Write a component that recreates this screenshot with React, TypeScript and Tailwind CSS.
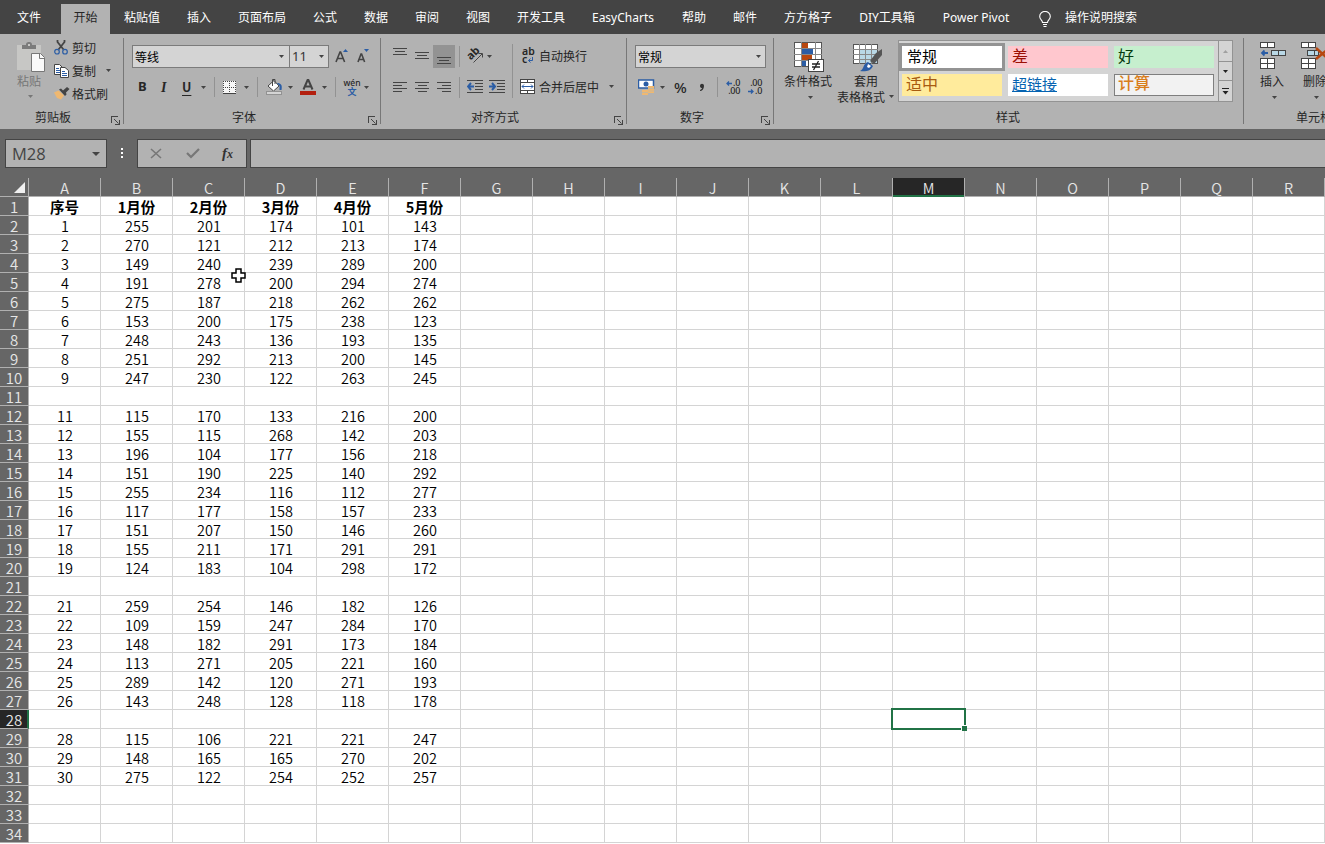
import React from "react";

type Tab = { label: string; w: string; active?: boolean };

const TABS: Tab[] = [
  { label: "文件", w: "w-[58px] mr-[3px]" },
  { label: "开始", w: "w-[49px]", active: true },
  { label: "粘贴值", w: "w-[64px]" },
  { label: "插入", w: "w-[50px]" },
  { label: "页面布局", w: "w-[76px]" },
  { label: "公式", w: "w-[50px]" },
  { label: "数据", w: "w-[52px]" },
  { label: "审阅", w: "w-[50px]" },
  { label: "视图", w: "w-[52px]" },
  { label: "开发工具", w: "w-[74px]" },
  { label: "EasyCharts", w: "w-[90px]" },
  { label: "帮助", w: "w-[52px]" },
  { label: "邮件", w: "w-[50px]" },
  { label: "方方格子", w: "w-[76px]" },
  { label: "DIY工具箱", w: "w-[82px]" },
  { label: "Power Pivot", w: "w-[96px]" },
];

const COLUMNS = "ABCDEFGHIJKLMNOPQR".split("");

const DATA: string[] = [
  "序号 1月份 2月份 3月份 4月份 5月份",
  "1 255 201 174 101 143",
  "2 270 121 212 213 174",
  "3 149 240 239 289 200",
  "4 191 278 200 294 274",
  "5 275 187 218 262 262",
  "6 153 200 175 238 123",
  "7 248 243 136 193 135",
  "8 251 292 213 200 145",
  "9 247 230 122 263 245",
  "",
  "11 115 170 133 216 200",
  "12 155 115 268 142 203",
  "13 196 104 177 156 218",
  "14 151 190 225 140 292",
  "15 255 234 116 112 277",
  "16 117 177 158 157 233",
  "17 151 207 150 146 260",
  "18 155 211 171 291 291",
  "19 124 183 104 298 172",
  "",
  "21 259 254 146 182 126",
  "22 109 159 247 284 170",
  "23 148 182 291 173 184",
  "24 113 271 205 221 160",
  "25 289 142 120 271 193",
  "26 143 248 128 118 178",
  "",
  "28 115 106 221 221 247",
  "29 148 165 165 270 202",
  "30 275 122 254 252 257",
  "",
  "",
  "",
];

function Icon({ w, h, className = "", children }: { w: number; h: number; className?: string; children: React.ReactNode }) {
  return (
    <svg width={w} height={h} viewBox={`0 0 ${w} ${h}`} className={`block shrink-0 ${className}`}>
      {children}
    </svg>
  );
}

function Arrow({ className = "", color = "#444444" }: { className?: string; color?: string }) {
  return (
    <Icon w={5} h={3} className={className}>
      <path d="M0 0H5L2.5 3Z" fill={color} />
    </Icon>
  );
}

function Launcher() {
  return (
    <Icon w={9} h={9} className="mr-[3px] mt-[8px]">
      <g stroke="#444444" fill="none" shapeRendering="crispEdges">
        <path d="M0.5 7V0.5H7" />
        <path d="M8.5 4V8.5H4" />
      </g>
      <path d="M3 3L7.5 7.5" stroke="#444444" />
    </Icon>
  );
}

function Group({ w, label, labelClass, launcher = true, children }: { w: string; label: string; labelClass: string; launcher?: boolean; children: React.ReactNode }) {
  return (
    <section className={`flex h-[95px] shrink-0 ${w}`}>
      <div className="flex min-w-0 flex-1 flex-col">
        <div className="flex h-[74px]">{children}</div>
        <div className="flex h-[21px] justify-between">
          <span className={`whitespace-nowrap leading-[17px] ${labelClass}`}>{label}</span>
          {launcher && <Launcher />}
        </div>
      </div>
      <div className="mt-[4px] h-[86px] w-px shrink-0 bg-[#777777]" />
    </section>
  );
}

function Rule({ className = "" }: { className?: string }) {
  return <div className={`w-px shrink-0 bg-[#929292] ${className}`} />;
}

function Lines({ kind, className = "" }: { kind: "mid" | "left" | "center" | "right"; className?: string }) {
  const d = {
    mid: "M0 .5H14M2 3.5H12M0 6.5H14",
    left: "M0 .5H14M0 3.5H9M0 6.5H14M0 9.5H9",
    center: "M0 .5H14M2.5 3.5H11.5M0 6.5H14M2.5 9.5H11.5",
    right: "M0 .5H14M5 3.5H14M0 6.5H14M5 9.5H14",
  }[kind];
  return (
    <Icon w={14} h={10} className={className}>
      <path d={d} stroke="#444444" shapeRendering="crispEdges" />
    </Icon>
  );
}

function Clipboard() {
  return (
    <Group w="w-[124px]" label="剪贴板" labelClass="pl-[35px]">
      <div className="flex w-[54px] flex-col pt-[8px] text-[#777777]">
        <Icon w={28} h={30} className="ml-[17px]">
          <path d="M0 3H24V28H0Z" fill="#c7c7c5" />
          <path d="M5 7V3H9C9 0 11 0 12 0S15 0 15 3H19V7Z" fill="#7b7b7b" />
          <rect x="11" y="2" width="2" height="2" fill="#c7c7c5" />
          <path d="M14.5 11.5H23.5L27.5 15.5V29.5H14.5Z" fill="#fafafa" stroke="#777" />
          <path d="M22.5 11.5V16.5H27.5" fill="none" stroke="#777" />
        </Icon>
        <span className="pl-[17px] leading-[18px]">粘贴</span>
        <Arrow className="ml-[28px] mt-[5px]" color="#777777" />
      </div>
      <div className="flex flex-col pt-[2px]">
        <div className="flex h-[23px] items-center">
          <Icon w={14} h={15}>
            <path d="M3.500 0V2L9.500 9.500M10.500 0V2L4.500 9.500" fill="none" stroke="#444" strokeWidth="1.800" />
            <circle cx="3" cy="11.700" r="2.300" fill="none" stroke="#2b5da5" strokeWidth="1.200" />
            <circle cx="11" cy="11.700" r="2.300" fill="none" stroke="#2b5da5" strokeWidth="1.200" />
          </Icon>
          <span className="ml-[4px]">剪切</span>
        </div>
        <div className="flex h-[23px] items-center">
          <Icon w={15} h={14}>
            <path d="M.5 .5H5.500L8.500 3.500V10.500H.5Z" fill="#fff" stroke="#444" />
            <path d="M2 4.500H5M2 6.500H6M2 8.500H6" stroke="#2b5da5" />
            <path d="M6.500 3.500H11L14.500 6.500V13.500H6.500Z" fill="#fff" stroke="#444" />
            <path d="M8 7.500H11M8 9.500H13M8 11.500H13" stroke="#2b5da5" />
          </Icon>
          <span className="ml-[3px]">复制</span>
          <Arrow className="ml-[10px]" />
        </div>
        <div className="flex h-[23px] items-center">
          <Icon w={16} h={13}>
            <path d="M0 5.500L4.500 3.500L10 8.500L7 12.500L3 11Z" fill="#efb871" />
            <path d="M5 2.500L7 1.500L9 3.500L13 0L15.500 2L12 5.500L12.500 7.500L11 9Z" fill="#444" />
          </Icon>
          <span className="ml-[2px]">格式刷</span>
        </div>
      </div>
    </Group>
  );
}

function FontGroup() {
  return (
    <Group w="w-[257px]" label="字体" labelClass="pl-[108px]">
      <div className="flex flex-col pl-[8px] pt-[11px]">
        <div className="flex h-[23px] items-center">
          <div className="flex h-[23px] w-[158px] items-center justify-between border border-[#7b7b7b] bg-[#d4d4d4] pl-[2px] pr-[5px] text-black">
            <span>等线</span>
            <Arrow />
          </div>
          <div className="-ml-px flex h-[23px] w-[40px] items-center justify-between border border-[#7b7b7b] bg-[#d4d4d4] pl-[2px] pr-[4px] text-[13px] text-[#333333]">
            <span className="font-['Noto_Sans'] leading-[19px]">11</span>
            <Arrow />
          </div>
          <Icon w={14} h={15} className="ml-[6px]">
            <path d="M1 13L5 3H5.600L9.600 13M2.500 9.500H8" fill="none" stroke="#444" strokeWidth="1.600" />
            <path d="M8 3H13L10.500 0Z" fill="#2b5da5" />
          </Icon>
          <Icon w={13} h={15} className="ml-[8px]">
            <path d="M1 13L4 5H4.600L7.600 13M2 10.500H6.500" fill="none" stroke="#444" strokeWidth="1.600" />
            <path d="M7 0H12L9.500 3Z" fill="#2b5da5" />
          </Icon>
        </div>
        <div className="mt-[8px] flex h-[22px] items-center">
          <span className="ml-[6px] w-[11px] pb-px font-['Noto_Sans'] text-[13px] font-bold">B</span>
          <span className="ml-[12px] w-[8px] font-['Liberation_Serif',serif] text-[14px] font-bold italic">I</span>
          <span className="ml-[13px] w-[10px] text-[12.500px] font-bold underline underline-offset-[3px]">U</span>
          <Arrow className="ml-[9px]" />
          <Rule className="ml-[8px] h-[20px]" />
          <Icon w={13} h={13} className="ml-[8px]">
            <rect width="13" height="13" fill="#f7f7f7" />
            <path d="M.5 0V13M6.500 0V13M12.500 0V13M0 .5H13M0 6.500H13" stroke="#444" strokeDasharray="1 1" shapeRendering="crispEdges" />
            <path d="M0 12.500H13" stroke="#444" shapeRendering="crispEdges" />
          </Icon>
          <Arrow className="ml-[8px]" />
          <Rule className="ml-[8px] h-[20px]" />
          <Icon w={17} h={16} className="ml-[8px]">
            <path d="M2 7L8 1.500L13 7L7.500 12Z" fill="#fff" stroke="#444" />
            <path d="M6.500 7V.5H9V5" fill="none" stroke="#444" />
            <path d="M11 4C15 4 16.500 6 15.500 11H13.500V7Z" fill="#2b5da5" />
            <rect x=".5" y="12.500" width="15" height="3" fill="#d4d4d4" stroke="#929292" />
          </Icon>
          <Arrow className="ml-[5px]" />
          <Icon w={16} h={16} className="ml-[7px]">
            <path d="M3.500 10.500L7.600 1H8.400L12.500 10.500M5 7.500H11" fill="none" stroke="#444" strokeWidth="2" />
            <rect y="12" width="16" height="4" fill="#b3200f" />
          </Icon>
          <Arrow className="ml-[6px]" />
          <Rule className="ml-[8px] h-[20px]" />
          <div className="ml-[7px] flex w-[18px] flex-col items-center">
            <span className="font-['Noto_Sans'] text-[8.500px] font-medium leading-[8px]">wén</span>
            <span className="text-[9px] font-bold leading-[9px] text-[#2b5da5]">文</span>
          </div>
          <Arrow className="ml-[3px]" />
        </div>
      </div>
    </Group>
  );
}

function Indent({ right = false }: { right?: boolean }) {
  return (
    <Icon w={16} h={13}>
      <path d="M0 .5H16M8 3.500H16M8 6.500H16M8 9.500H16M0 12.500H16" stroke="#444" shapeRendering="crispEdges" />
      <path d={right ? "M0 6.500H5M3 3L6 6.500L3 10" : "M7 6.500H2M4 3L1 6.500L4 10"} stroke="#2b5da5" strokeWidth="2" fill="none" />
    </Icon>
  );
}

function AlignGroup() {
  return (
    <Group w="w-[246px]" label="对齐方式" labelClass="pl-[90px]">
      <div className="flex w-[132px] flex-col pl-[12px] pt-[11px]">
        <div className="flex h-[23px]">
          <Lines kind="mid" className="mt-[3px]" />
          <Lines kind="mid" className="ml-[8px] mt-[7px]" />
          <div className="ml-[4px] flex h-[23px] w-[22px] justify-center bg-[#939393]">
            <Lines kind="mid" className="mt-[12px]" />
          </div>
          <Rule className="ml-[4px] mt-[1px] h-[21px]" />
          <div className="ml-[7px] mt-[2px] h-[17px] w-[17px]">
            <div className="relative h-[17px] w-[17px]">
              <span className="absolute left-[-1px] top-[1px] block -rotate-45 font-['Noto_Sans'] text-[11px] font-bold leading-[10px]">ab</span>
              <Icon w={17} h={17} className="absolute left-0 top-0">
                <path d="M6.500 15.500L15 7M11.500 6.500H15.500V10.500" stroke="#444" fill="none" />
              </Icon>
            </div>
          </div>
          <Arrow className="ml-[3px] mt-[10px]" />
        </div>
        <div className="mt-[9px] flex h-[22px]">
          <Lines kind="left" className="mt-[5px]" />
          <Lines kind="center" className="ml-[8px] mt-[5px]" />
          <Lines kind="right" className="ml-[8px] mt-[5px]" />
          <Rule className="ml-[8px] h-[21px]" />
          <div className="ml-[7px] mt-[3px] flex gap-[6px]">
            <Indent />
            <Indent right />
          </div>
        </div>
      </div>
      <Rule className="-ml-px mt-[10px] h-[54px]" />
      <div className="flex flex-col pl-[7px] pt-[10px]">
        <div className="flex h-[23px] items-center">
          <div className="flex h-[17px] w-[16px] flex-col pl-[2px] font-['Noto_Sans'] text-[10.500px] font-semibold leading-[8px]">
            <span>ab</span>
            <div className="flex gap-[1px]">
              <span>c</span>
              <Icon w={5} h={6} className="mt-[2px]">
                <path d="M4.500 0V3.500H.5M2.500 1.500L.5 3.500L2.500 5.500" stroke="#2b5da5" fill="none" />
              </Icon>
            </div>
          </div>
          <span className="ml-[3px]">自动换行</span>
        </div>
        <div className="mt-[8px] flex h-[23px] items-center">
          <Icon w={15} h={15}>
            <rect x=".5" y=".5" width="14" height="14" fill="#fff" stroke="#444" />
            <path d="M0 3.500H15M0 11.500H15M7.500 0V3M7.500 12V15" stroke="#444" shapeRendering="crispEdges" />
            <path d="M2 7.500H13M4 5.500L2 7.500L4 9.500M11 5.500L13 7.500L11 9.500" stroke="#2b5da5" fill="none" />
          </Icon>
          <span className="ml-[4px]">合并后居中</span>
          <Arrow className="ml-[10px]" />
        </div>
      </div>
    </Group>
  );
}

function Decimal({ less = false }: { less?: boolean }) {
  const arrow = (
    <Icon w={6} h={5}>
      <path d={less ? "M0 2.500H5M3 .5L5 2.500L3 4.500" : "M6 2.500H1M3 .5L1 2.500L3 4.500"} stroke="#2b5da5" strokeWidth="1.300" fill="none" />
    </Icon>
  );
  return (
    <div className="flex h-[16px] w-[16px] flex-col items-end font-['Noto_Sans'] text-[9px] font-medium leading-[8px] tracking-[-0.300px]">
      <div className="flex h-[8px] items-center gap-[1px]">
        {!less && arrow}
        <span>{less ? ".00" : ".0"}</span>
      </div>
      <div className="flex h-[8px] items-center gap-[1px]">
        {less && arrow}
        <span>{less ? ".0" : ".00"}</span>
      </div>
    </div>
  );
}

function NumberGroup() {
  return (
    <Group w="w-[147px]" label="数字" labelClass="pl-[53px]">
      <div className="flex flex-col pl-[8px] pt-[11px]">
        <div className="flex h-[23px] w-[131px] items-center justify-between border border-[#7b7b7b] bg-[#d4d4d4] pl-[2px] pr-[4px] text-black">
          <span>常规</span>
          <Arrow />
        </div>
        <div className="mt-[8px] flex h-[22px] items-center">
          <Icon w={17} h={17} className="ml-[3px]">
            <rect x=".5" y="1" width="15" height="8" fill="#fff" stroke="#2b5da5" strokeWidth="1.500" />
            <circle cx="8" cy="5" r="2.500" fill="#2b5da5" />
            <path d="M10 7H16V14H10V16H4V11H10Z" fill="#efb871" />
            <path d="M4 13.500H10M10 9.500H16M10 12H16" stroke="#c9b79a" />
          </Icon>
          <Arrow className="ml-[5px]" />
          <span className="ml-[9px] w-[14px] font-['Noto_Sans'] text-[15px] font-medium">%</span>
          <Icon w={6} h={9} className="ml-[11px]">
            <path d="M1 3C1 0 5 0 5 3C5 6 3 8 1 8L1 7C2.500 6.500 3 5.500 3 5C2 5 1 4.500 1 3Z" fill="#333" />
          </Icon>
          <Rule className="ml-[12px] h-[20px]" />
          <div className="ml-[6px] flex gap-[6px]">
            <Decimal />
            <Decimal less />
          </div>
        </div>
      </div>
    </Group>
  );
}

function StylesGroup() {
  return (
    <Group w="w-[470px]" label="样式" labelClass="pl-[222px]" launcher={false}>
      <div className="flex w-[63px] flex-col pt-[8px]">
        <Icon w={31} h={31} className="ml-[20px]">
          <g shapeRendering="crispEdges">
            <path d="M.5 .5H27.500V24.500H.5Z" fill="#fff" stroke="#555" />
            <path d="M0 6.500H28M0 12.500H28M0 18.500H28M7.500 0V25M21.500 0V25" stroke="#888" />
            <path d="M8 1H14V6H8ZM8 13H18V18H8Z" fill="#b8470f" />
            <path d="M8 7H19V12H8ZM8 19H12V24H8Z" fill="#2b5da5" />
            <path d="M14.500 17.500H29.500V29.500H14.500Z" fill="#fff" stroke="#444" />
          </g>
          <path d="M18 22H26M18 25H26M24.500 19L19.500 28" stroke="#222" strokeWidth="1.300" />
        </Icon>
        <span className="pl-[10px] leading-[16px]">条件格式</span>
        <Arrow className="ml-[34px] mt-[7px]" />
      </div>
      <div className="flex w-[61px] flex-col pt-[9px]">
        <Icon w={30} h={29} className="ml-[16px]">
          <g shapeRendering="crispEdges">
            <path d="M.5 1.500H24.500V20.500H.5Z" fill="#fff" stroke="#555" />
            <path d="M7 6H24V20H7Z" fill="#b9d8e6" />
            <path d="M0 6.500H25M0 11.500H25M0 16.500H25M6.500 1V21M12.500 1V21M18.500 1V21" stroke="#888" />
          </g>
          <path d="M29 6V12L21 21L17 18L23 10Z" fill="#555" />
          <path d="M7 28C11 27 10 20 15 19L20 23C18 28 12 29 7 28Z" fill="#2b5da5" />
          <path d="M15 21L18 23L16 25L14 24Z" fill="#fff" />
        </Icon>
        <span className="pl-[17px] pt-[1px] leading-[16px]">套用</span>
        <div className="flex items-center whitespace-nowrap leading-[15px]">
          <span>表格格式</span>
          <Arrow className="ml-[4px]" />
        </div>
      </div>
      <div className="mt-[6px] flex h-[62px] w-[335px] border border-[#939393] bg-[#d4d4d4]">
        <div className="grid w-[319px] grid-cols-3 grid-rows-2 gap-x-[6px] gap-y-[6px] py-[5px] pl-[3px] pr-[4px] text-[16px] leading-[19px]">
          <div className="bg-white pl-[5px] text-[15px] text-black outline-[3px] outline-[#939393]">常规</div>
          <div className="bg-[#ffc7ce] pl-[4px] text-[#9c1006]">差</div>
          <div className="bg-[#c6efce] pl-[4px] text-[#063b10]">好</div>
          <div className="bg-[#ffeb9c] pl-[4px] text-[#a85b10]">适中</div>
          <div className="bg-white pl-[4px] text-[15px] text-[#0563b1] underline">超链接</div>
          <div className="border border-[#7f7f7f] bg-[#f2f2f2] pl-[3px] font-medium leading-[15px] text-[#d97e1c]">计算</div>
        </div>
        <div className="flex w-[14px] flex-col border-l border-[#939393]">
          <div className="flex h-[21px] items-center justify-center border-b border-[#939393]">
            <Arrow className="rotate-180" color="#a0a0a0" />
          </div>
          <div className="flex h-[19px] items-center justify-center border-b border-[#939393]">
            <Arrow color="#222222" />
          </div>
          <div className="flex flex-1 items-center justify-center">
            <Icon w={7} h={7}>
              <path d="M0 .5H7" stroke="#222" />
              <path d="M.5 3H6.500L3.500 6.500Z" fill="#222" />
            </Icon>
          </div>
        </div>
      </div>
    </Group>
  );
}

function CellsIcon({ remove = false }: { remove?: boolean }) {
  return (
    <Icon w={26} h={28}>
      <g shapeRendering="crispEdges" stroke="#444" fill="#fff">
        <path d="M.5 .5H14.500V5.500H.5ZM7.500 .5V5.500" />
        <path d="M.5 16.500H14.500V26.500H.5ZM7.500 16.500V26.500M.5 21.500H14.500" />
        <path d={remove ? "M6.500 8.500H17.500V13.500H6.500ZM13.500 8.500V13.500" : "M11.500 8.500H25.500V13.500H11.500ZM18.500 8.500V13.500"} fill="#b9d8e6" />
      </g>
      {remove ? (
        <path d="M15 6L26 16M26 8L15 17" stroke="#b8470f" strokeWidth="2.500" />
      ) : (
        <path d="M8 11H2M4.500 8.500L2 11L4.500 13.500" stroke="#2b5da5" strokeWidth="1.800" fill="none" />
      )}
    </Icon>
  );
}

function Cells() {
  return (
    <section className="flex h-[95px] flex-1 flex-col overflow-hidden whitespace-nowrap">
      <div className="flex h-[74px] pl-[16px] pt-[8px]">
        <div className="w-[41px] shrink-0">
          <CellsIcon />
          <span className="mt-[3px] block leading-[16px]">插入</span>
          <Arrow className="ml-[12px] mt-[7px]" />
        </div>
        <div className="w-[41px] shrink-0">
          <CellsIcon remove />
          <span className="mt-[3px] block pl-[2px] leading-[16px]">删除</span>
          <Arrow className="ml-[13px] mt-[7px]" />
        </div>
      </div>
      <span className="pl-[52px] leading-[17px]">单元格</span>
    </section>
  );
}

function FormulaBar() {
  return (
    <div className="flex h-[49px] items-start bg-[#666666] pt-[10px]">
      <div className="ml-[5px] flex h-[29px] w-[102px] items-center justify-between border border-[#444444] bg-[#b2b2b2] pl-[6px] pr-[6px]">
        <span className="font-['Open_Sans'] text-[16.500px] leading-[28px] text-[#444444]">M28</span>
        <Icon w={8} h={4}>
          <path d="M0 0H8L4 4Z" fill="#444" />
        </Icon>
      </div>
      <Icon w={2} h={10} className="ml-[14px] mt-[9px]">
        <path d="M0 0H2V2H0ZM0 4H2V6H0ZM0 8H2V10H0Z" fill="#fff" />
      </Icon>
      <div className="ml-[14px] flex h-[29px] w-[110px] items-center border border-[#444444] bg-[#b2b2b2]">
        <Icon w={12} h={11} className="ml-[12px]">
          <path d="M1 1L11 10M11 1L1 10" stroke="#777" strokeWidth="1.600" />
        </Icon>
        <Icon w={14} h={11} className="ml-[24px]">
          <path d="M1 5L5 9L13 1" stroke="#777" strokeWidth="2.200" fill="none" />
        </Icon>
        <span className="ml-[22px] font-['Liberation_Serif',serif] text-[15px] font-bold italic leading-[15px] text-[#333333]">
          f<span className="text-[12px]">x</span>
        </span>
      </div>
      <div className="ml-[3px] h-[29px] flex-1 border-y border-l border-[#444444] bg-[#b2b2b2]" />
    </div>
  );
}

function SheetHeader() {
  return (
    <div className="flex h-[19px] bg-[#666666] text-[14.500px] font-[350] leading-[19px] text-[#e6e6e6]">
      <div className="flex w-[29px] items-start justify-end border-b border-r border-[#b0b0b0] pr-[3px] pt-[4px]">
        <Icon w={11} h={11}>
          <path d="M11 0V11H0Z" fill="#f0f0f0" />
        </Icon>
      </div>
      {COLUMNS.map((c) => (
        <div
          key={c}
          className={
            c === "M"
              ? "h-[19px] w-[72px] border-r border-r-[#b0b0b0] bg-[#262626] text-center shadow-[inset_0_-2px_0_#217346]"
              : "h-[19px] w-[72px] border-b border-r border-[#b0b0b0] text-center"
          }
        >
          {c}
        </div>
      ))}
    </div>
  );
}

function Sheet() {
  return (
    <div className="bg-white text-[14.500px] text-black">
      {DATA.map((line, r) => {
        const values = line ? line.split(" ") : [];
        return (
          <div key={r} className="flex h-[19px] font-[350] leading-[19px]">
            <div
              className={
                r === 27
                  ? "h-[19px] w-[29px] border-b border-b-[#b0b0b0] border-r-2 border-r-[#217346] bg-[#262626] pl-px text-center text-[15px] text-[#e6e6e6]"
                  : "h-[19px] w-[29px] border-b border-r border-[#b0b0b0] bg-[#666666] text-center text-[15px] text-[#e6e6e6]"
              }
            >
              {r + 1}
            </div>
            {COLUMNS.map((c, i) => (
              <div
                key={c}
                className={`relative h-[19px] w-[72px] border-b border-r border-[#d4d4d4] text-center ${r === 0 ? "font-bold" : "pl-px"}`}
              >
                {values[i]}
                {r === 27 && c === "M" && (
                  <div className="absolute -left-[2px] -top-[2px] z-10 h-[22px] w-[75px] border-2 border-[#217346]">
                    <div className="absolute -bottom-[3px] -right-[3px] h-[6px] w-[6px] border-l border-t border-white bg-[#217346]" />
                  </div>
                )}
                {r === 4 && c === "C" && (
                  <Icon w={15} h={15} className="absolute -top-[5px] left-[58px] z-10">
                    <path d="M5 1H10V5H14V10H10V14H5V10H1V5H5Z" fill="#fff" stroke="#000" strokeWidth="1.500" />
                  </Icon>
                )}
              </div>
            ))}
          </div>
        );
      })}
      <div className="h-px" />
    </div>
  );
}

export default function App() {
  return (
    <div className="h-[844px] w-[1325px] overflow-hidden bg-[#666666] font-['Noto_Sans_CJK_SC',sans-serif] text-[12px] text-[#262626]">
      <nav className="flex h-[34px] bg-[#444444] pt-[4px] font-['Noto_Sans','Noto_Sans_CJK_SC',sans-serif] text-white">
        {TABS.map((t) => (
          <div
            key={t.label}
            className={`flex h-[30px] shrink-0 items-center justify-center whitespace-nowrap pb-[2px] ${t.w} ${t.active ? "bg-[#b2b2b2] text-[#262626]" : ""}`}
          >
            {t.label}
          </div>
        ))}
        <Icon w={12} h={17} className="ml-[15px] mt-[7px]">
          <path d="M3.500 11.500C3.500 9 .7 8.500 .7 5.500A5.200 5 0 0 1 11.300 5.500C11.300 8.500 8.500 9 8.500 11.500ZM4 13.500H8M4.500 15.500H7.500" stroke="#fff" fill="none" strokeWidth="1.100" />
        </Icon>
        <span className="ml-[14px] leading-[28px]">操作说明搜索</span>
      </nav>
      <div className="flex h-[95px] bg-[#b2b2b2]">
        <Clipboard />
        <FontGroup />
        <AlignGroup />
        <NumberGroup />
        <StylesGroup />
        <Cells />
      </div>
      <FormulaBar />
      <SheetHeader />
      <Sheet />
    </div>
  );
}
